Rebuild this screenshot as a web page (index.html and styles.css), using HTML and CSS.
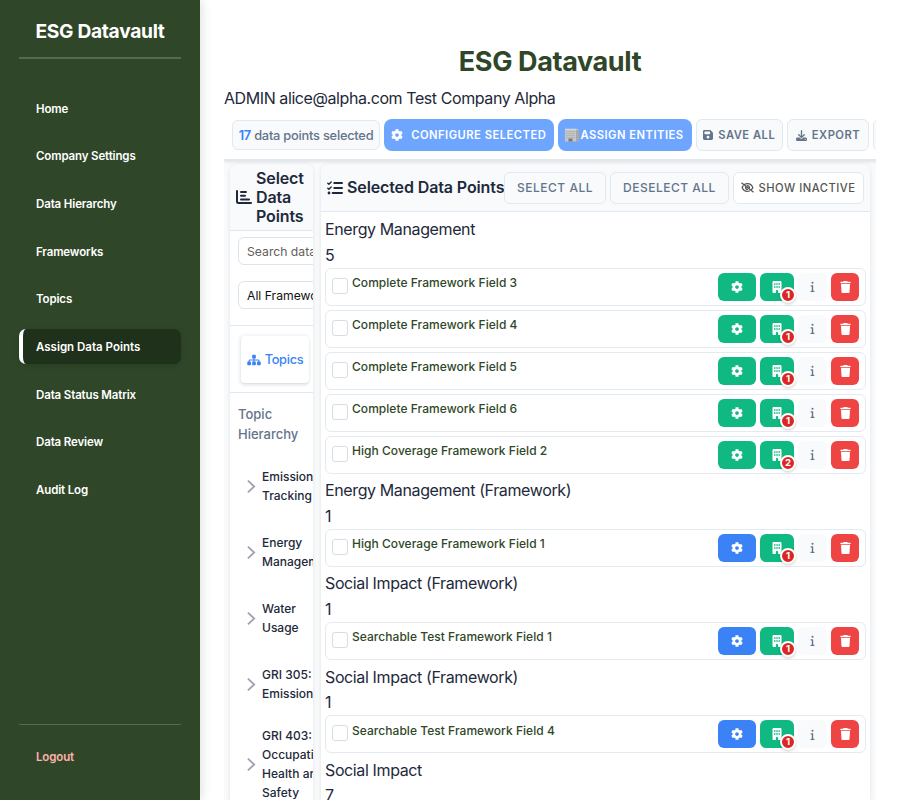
FILE: index.html
```
<!DOCTYPE html>
<html lang="en">
<head>
<meta charset="utf-8">
<title>ESG Datavault</title>
<link rel="stylesheet" href="styles.css">
</head>
<body>
<svg class="defs" aria-hidden="true">
<symbol id="gear" viewBox="0 0 512 512"><path d="M487.4 315.7l-42.6-24.6c4.3-23.2 4.3-47 0-70.2l42.6-24.6c4.9-2.8 7.1-8.6 5.5-14-11.1-35.6-30-67.8-54.7-94.6-3.8-4.1-10-5.1-14.8-2.3L380.8 110c-17.9-15.4-38.5-27.3-60.8-35.1V25.8c0-5.6-3.9-10.5-9.4-11.7-36.7-8.2-74.3-7.8-109.2 0-5.5 1.2-9.4 6.1-9.4 11.7V75c-22.2 7.9-42.8 19.8-60.8 35.1L88.7 85.5c-4.9-2.8-11-1.9-14.8 2.3-24.7 26.7-43.6 58.9-54.7 94.6-1.7 5.4.6 11.2 5.5 14L67.3 221c-4.3 23.2-4.3 47 0 70.2l-42.6 24.6c-4.9 2.8-7.1 8.6-5.5 14 11.1 35.6 30 67.8 54.7 94.6 3.8 4.1 10 5.1 14.8 2.3l42.6-24.6c17.9 15.4 38.5 27.3 60.8 35.1v49.2c0 5.6 3.9 10.5 9.4 11.7 36.7 8.2 74.3 7.8 109.2 0 5.5-1.2 9.4-6.1 9.4-11.7v-49.2c22.2-7.9 42.8-19.8 60.8-35.1l42.6 24.6c4.9 2.8 11 1.9 14.8-2.3 24.7-26.7 43.6-58.9 54.7-94.6 1.5-5.5-.7-11.3-5.6-14.1zM256 336c-44.1 0-80-35.9-80-80s35.9-80 80-80 80 35.9 80 80-35.9 80-80 80z"/></symbol>
<symbol id="trash" viewBox="0 0 448 512"><path d="M135.2 17.7L128 32H32C14.3 32 0 46.3 0 64S14.3 96 32 96H416c17.7 0 32-14.3 32-32s-14.3-32-32-32H320l-7.2-14.3C307.4 6.8 296.3 0 284.2 0H163.8c-12.1 0-23.2 6.8-28.6 17.7zM416 128H32L53.2 467c1.6 25.3 22.6 45 47.9 45H346.9c25.3 0 46.3-19.7 47.9-45L416 128z"/></symbol>
<symbol id="info" viewBox="0 0 192 512"><path d="M48 80a48 48 0 1 1 96 0A48 48 0 1 1 48 80zM0 224c0-17.7 14.3-32 32-32H96c17.7 0 32 14.3 32 32V448h32c17.7 0 32 14.3 32 32s-14.3 32-32 32H32c-17.7 0-32-14.3-32-32s14.3-32 32-32H64V256H32c-17.7 0-32-14.3-32-32z"/></symbol>
<symbol id="building" viewBox="0 0 384 512"><path fill-rule="evenodd" d="M48 0C21.500 0 0 21.500 0 48V464c0 26.500 21.500 48 48 48h96V432c0-26.500 21.500-48 48-48s48 21.500 48 48v80h96c26.500 0 48-21.500 48-48V48c0-26.500-21.500-48-48-48H48zM64 96h64v64H64zM160 96h64v64h-64zM256 96h64v64h-64zM64 224h64v64H64zM160 224h64v64h-64zM256 224h64v64h-64z"/></symbol>
<symbol id="save" viewBox="0 0 448 512"><path d="M64 32C28.700 32 0 60.700 0 96V416c0 35.300 28.700 64 64 64H384c35.300 0 64-28.700 64-64V173.300c0-17-6.700-33.300-18.700-45.300L352 50.700C340 38.700 323.700 32 306.700 32H64zm0 96c0-17.700 14.300-32 32-32H288c17.700 0 32 14.300 32 32v64c0 17.700-14.300 32-32 32H96c-17.700 0-32-14.300-32-32V128zM224 288a64 64 0 1 1 0 128 64 64 0 1 1 0-128z"/></symbol>
<symbol id="download" viewBox="0 0 512 512"><path d="M288 32c0-17.700-14.300-32-32-32s-32 14.300-32 32V274.700l-73.400-73.400c-12.500-12.500-32.800-12.500-45.300 0s-12.500 32.800 0 45.300l128 128c12.500 12.500 32.800 12.500 45.300 0l128-128c12.500-12.500 12.500-32.800 0-45.300s-32.800-12.500-45.300 0L288 274.700V32zM64 352c-35.300 0-64 28.700-64 64v32c0 35.300 28.700 64 64 64H448c35.300 0 64-28.700 64-64V416c0-35.300-28.700-64-64-64H346.500l-45.300 45.300c-25 25-65.500 25-90.500 0L165.500 352H64zm368 56a24 24 0 1 1 0 48 24 24 0 1 1 0-48z"/></symbol>
<symbol id="eye" viewBox="0 0 20 16"><g fill="none" stroke="currentColor" stroke-width="1.900" stroke-linecap="round"><path d="M5.200 3.500C7 2.300 8.500 2 10 2c4 0 7 2.800 8.200 6-.5 1.200-1.200 2.200-2.200 3.200M13 13.400c-1 .4-2 .6-3 .6-4 0-7-2.800-8.200-6 .3-.8.8-1.600 1.400-2.300M7 7.500c0 2 1.200 3.400 3 3.500M9.500 5.100c2 0 3.500 1.300 3.500 3.300M1.200 1.200l17.600 13.600"/></g></symbol>
<symbol id="sitemap" viewBox="0 0 576 512"><path d="M208 80c0-26.500 21.500-48 48-48h64c26.500 0 48 21.500 48 48v64c0 26.500-21.500 48-48 48h-8v40H464c30.900 0 56 25.100 56 56v32h8c26.500 0 48 21.500 48 48v64c0 26.500-21.500 48-48 48H464c-26.500 0-48-21.500-48-48V368c0-26.500 21.500-48 48-48h8V288c0-4.400-3.600-8-8-8H312v40h8c26.500 0 48 21.500 48 48v64c0 26.500-21.500 48-48 48H256c-26.500 0-48-21.500-48-48V368c0-26.500 21.500-48 48-48h8V280H112c-4.400 0-8 3.600-8 8v32h8c26.500 0 48 21.500 48 48v64c0 26.500-21.500 48-48 48H48c-26.500 0-48-21.500-48-48V368c0-26.500 21.500-48 48-48h8V288c0-30.900 25.100-56 56-56H264V192h-8c-26.500 0-48-21.500-48-48V80z"/></symbol>
<symbol id="chart" viewBox="0 0 16 14"><path fill="none" stroke="currentColor" stroke-width="2" stroke-linecap="round" stroke-linejoin="round" d="M1 1v10.500Q1 13 2.500 13H15M5 2h5M5 5.700h4M5 9.400h8"/></symbol>
<symbol id="checks" viewBox="0 0 16 14"><g fill="none" stroke="currentColor" stroke-linecap="round" stroke-linejoin="round"><path stroke-width="2" d="M7.300 2H15M7.300 7H15M5.700 12H15"/><path stroke-width="1.400" d="M.8 2.200l1.100 1.100L4.200.9M.8 7.200l1.100 1.100L4.200 5.900"/></g><circle cx="2" cy="12" r="1.400"/></symbol>
<symbol id="chevron" viewBox="0 0 10 16"><path fill="none" stroke="currentColor" stroke-width="2" d="M1 1.500l7 6.500-7 6.500"/></symbol>
<symbol id="office" viewBox="0 0 14 14"><path fill="#c6c6c4" d="M0 1h11v12.500H0z"/><path fill="#aaa9a7" d="M11 1.500h3v12h-3z"/><path fill="#dcdcda" d="M0 .8h11l3 .9H0z"/><path stroke="#a9b0b3" stroke-width=".7" d="M1 3.500h9M1 5.500h9M1 7.500h9M1 9.500h9"/><path fill="#77797a" d="M3.500 10.500h4v3h-4z"/></symbol>
</svg>
<div class="app">
  <aside class="sidebar">
    <div class="brand">ESG Datavault</div>
    <nav class="nav">
      <a>Home</a><a>Company Settings</a><a>Data Hierarchy</a><a>Frameworks</a><a>Topics</a><a class="active">Assign Data Points</a><a>Data Status Matrix</a><a>Data Review</a><a>Audit Log</a>
    </nav>
    <div class="logout">Logout</div>
  </aside>
  <main class="main">
    <h1>ESG Datavault</h1>
    <div class="user">ADMIN alice@alpha.com Test Company Alpha</div>
    <div class="toolbar">
      <div class="count"><b>17</b> data points selected</div>
      <button class="btn primary configure"><svg><use href="#gear"/></svg>CONFIGURE SELECTED</button>
      <button class="btn primary assign"><svg><use href="#office"/></svg>ASSIGN ENTITIES</button>
      <button class="btn save"><svg><use href="#save"/></svg>SAVE ALL</button>
      <button class="btn export"><svg><use href="#download"/></svg>EXPORT</button>
      <button class="btn more"></button>
    </div>
    <div class="panels">
      <section class="panel left">
        <header><svg><use href="#chart"/></svg><h2>Select Data Points</h2></header>
        <div class="filters"><div class="field muted">Search data points...</div><div class="field">All Frameworks</div></div>
        <div class="tabs"><div class="tabtrack"><div class="tab"><svg><use href="#sitemap"/></svg>Topics</div></div></div>
        <div class="hierarchy">
          <h3>Topic Hierarchy</h3>
          <div class="node"><svg><use href="#chevron"/></svg><span>Emissions<br>Tracking</span></div>
          <div class="node"><svg><use href="#chevron"/></svg><span>Energy<br>Management</span></div>
          <div class="node"><svg><use href="#chevron"/></svg><span>Water<br>Usage</span></div>
          <div class="node"><svg><use href="#chevron"/></svg><span>GRI 305:<br>Emissions</span></div>
          <div class="node tall"><svg><use href="#chevron"/></svg><span>GRI 403:<br>Occupational<br>Health and<br>Safety</span></div>
        </div>
      </section>
      <section class="panel right">
        <header><svg><use href="#checks"/></svg><h2>Selected Data Points</h2><button class="btn selectall">SELECT ALL</button><button class="btn deselect">DESELECT ALL</button><button class="btn inactive"><svg><use href="#eye"/></svg>SHOW INACTIVE</button></header>
        <div class="groups" id="groups"></div>
      </section>
    </div>
  </main>
</div>
<script src="script.js"></script>
</body>
</html>
```
FILE: styles.css
```
*{box-sizing:border-box}
body{margin:0;font-family:Inter,sans-serif;font-size:16px;line-height:25.6px;color:#1e293b;background:#fff}
.defs{display:none}
svg{fill:currentColor;flex:none;overflow:visible}
.app{display:flex;height:800px;overflow:hidden}
.sidebar{width:200px;flex:none;background:#2f4728;color:#fff;padding:0 19px;display:flex;flex-direction:column;box-shadow:2px 0 10px rgba(0,0,0,.12);z-index:1}
.brand{height:59px;border-bottom:2px solid #57694f;text-align:center;font-size:19.2px;font-weight:700;line-height:63px;letter-spacing:-.3px;white-space:nowrap}
.nav{display:flex;flex-direction:column;gap:12.7px;margin-top:31.500px}
.nav a{height:35px;border-left:4px solid transparent;border-radius:7px;padding-left:13px;font-size:11.500px;font-weight:600;line-height:36.500px;letter-spacing:-.14px}
.nav .active{background:#1f301b;border-left-color:#fff;box-shadow:0 2px 6px rgba(0,0,0,.15);letter-spacing:0}
.logout{margin-top:auto;height:76px;border-top:1px solid #57694f;padding-left:17px;line-height:65px;font-size:11.500px;font-weight:600;color:#feb2ae;letter-spacing:-.14px}
.main{width:652px;margin-left:24px;display:flex;flex-direction:column;overflow:hidden}
h1{margin:43px 0 0;height:43px;flex:none;text-align:center;font-size:27px;line-height:38px;font-weight:700;letter-spacing:-.37px;color:#2f4728}
.user{height:33px;flex:none;line-height:25px;letter-spacing:-.42px;white-space:nowrap}
.toolbar{display:flex;gap:4px;height:42px;flex:none;padding-left:8px;border-bottom:2px solid #e2e8f0;box-shadow:0 1px 3px rgba(0,0,0,.1);clip-path:inset(0 0 -6px 0);position:relative;align-items:flex-start}
.count{width:148px;height:30px;margin-top:1px;border:1px solid #e2e8f0;border-radius:6px;background:#f8fafc;font-size:12.800px;font-weight:500;line-height:29px;color:#64748b;text-align:center;white-space:nowrap;letter-spacing:-.22px;flex:none}
.count b{color:#3b82f6;font-weight:600}
.btn{height:32px;padding:0;border:1px solid #e2e8f0;border-radius:6px;background:#f8fafc;color:#64748b;display:flex;align-items:center;justify-content:center;font:600 11.200px Inter,sans-serif;letter-spacing:.5px;white-space:nowrap;flex:none}
.primary{background:#6ea6ff;border:0;border-radius:8px;color:#fff}
.configure{width:169.500px}.configure svg{width:12px;height:12px;margin-right:8px}
.assign{width:134px}.assign svg{width:14px;height:14px;margin-right:1px}
.save{width:87.500px}.save svg{width:10px;height:12px;margin-right:5px}
.export{width:82px}.export svg{width:11px;height:11px;margin-right:5px}
.more{width:40px}
.panels{flex:1;min-height:0;display:flex;gap:8px;padding:3px 6px 0;background:#f8fafc}
.panel{background:#fff;border-radius:8px 8px 0 0;box-shadow:0 1px 4px rgba(0,0,0,.1);overflow:hidden}
.left{width:83px;flex:none}
.right{flex:1}
.panel header{background:#f8fafc;border-bottom:1px solid #e2e8f0;display:flex;align-items:center}
h2{margin:0;font-size:16px;font-weight:600;line-height:19px;letter-spacing:-.12px}
.left header{height:67px;padding-left:6px}
.left header svg{width:16px;height:14px;margin-right:4px}
.right header{height:48px;padding-left:6px}
.right header svg{width:16px;height:14px;margin-right:4px}
.right h2{width:157px;white-space:nowrap}
.right .btn{font-size:12px;font-weight:500}
.right .btn+.btn{margin-left:4px}
.right .selectall{width:102px}
.right .deselect{width:119px}
.right .inactive{width:131px;background:#fff;color:#555;font-size:11.200px}
.right .inactive svg{width:13px;height:11px;margin-right:4px}
.filters{height:95px;padding:6px 0 0 8px;border-bottom:1px solid #e2e8f0;display:flex;flex-direction:column;gap:16px}
.field{width:140px;height:28px;border:1px solid #dce4ed;border-radius:6px;padding-left:8px;font-size:12.200px;line-height:27px;color:#111;white-space:nowrap}
.muted{color:#606060}
.tabs{height:67px;border-bottom:1px solid #e2e8f0;padding:7px 0 0 8px}
.tabtrack{width:71px;height:54px;background:#f8fafc;border-radius:6px;padding:3px}
.tab{width:68px;height:47px;background:#fff;border-radius:4px;box-shadow:0 1px 3px rgba(0,0,0,.15);display:flex;align-items:center;justify-content:center;gap:4px;color:#3b82f6;font-size:12.800px;font-weight:500;letter-spacing:-.3px}
.tab svg{width:14px;height:12px}
.hierarchy{padding:11px 0 0 8px}
h3{margin:0;font-size:13px;font-weight:500;line-height:20px;color:#64748b;width:70px}
.node{height:66px;display:flex;align-items:center;padding-left:9px;font-size:12px;font-weight:500;line-height:19px;white-space:nowrap}
.node svg{width:9px;height:15px;margin-right:6px;color:#9ca3af}
h3+.node{margin-top:9px}
.tall{height:94px}
.groups{padding:5px 4px 0}
.group-head{letter-spacing:-.38px;margin-bottom:-.7px}
.row{height:38px;margin-bottom:4px;border:1px solid #e4eaf1;border-radius:6px;display:flex;align-items:center;padding:0 6px}
.row+.group-head{margin-top:4.7px}
.box{width:16px;height:16px;border:1px solid #d8dde4;border-radius:3px;background:#fff;margin-top:-2px}
.name{flex:1;align-self:flex-start;padding-left:4px;margin-top:4.600px;color:#2f4728;font-size:12px;font-weight:500;line-height:20px;letter-spacing:.04px}
.act{height:28px;border-radius:6px;display:flex;align-items:center;justify-content:center;margin-left:4px;color:#fff;background:#10b981;position:relative}
.cog{width:38.500px}.cog svg{width:12px;height:12px}
.blue{background:#3b82f6}
.ent{width:34px}.ent svg{width:10px;height:12px}
.inf{width:29px;background:#f8fafc;color:#64748b}.inf svg{width:5px;height:11px}
.del{width:28px;background:#ef4444}.del svg{width:11px;height:12px}
.badge{position:absolute;right:-2px;bottom:-2px;width:16px;height:16px;border:2px solid #fff;border-radius:50%;background:#dc2626;font-size:9.600px;font-weight:700;line-height:12px;text-align:center;box-shadow:0 1px 3px rgba(0,0,0,.2)}
```
FILE: script.js
```
const groups = [
  ["Energy Management", 5, [["Complete Framework Field 3", 1], ["Complete Framework Field 4", 1], ["Complete Framework Field 5", 1], ["Complete Framework Field 6", 1], ["High Coverage Framework Field 2", 2]]],
  ["Energy Management (Framework)", 1, [["High Coverage Framework Field 1", 1, "blue"]]],
  ["Social Impact (Framework)", 1, [["Searchable Test Framework Field 1", 1, "blue"]]],
  ["Social Impact (Framework)", 1, [["Searchable Test Framework Field 4", 1, "blue"]]],
  ["Social Impact", 7, []]
];
const icon = id => `<svg><use href="#${id}"/></svg>`;
document.getElementById("groups").innerHTML = groups.map(([title, count, rows]) =>
  `<div class="group-head"><div>${title}</div><div>${count}</div></div>` + rows.map(([name, n, tone = ""]) =>
    `<div class="row"><span class="box"></span><span class="name">${name}</span><span class="act cog ${tone}">${icon("gear")}</span><span class="act ent">${icon("building")}<span class="badge">${n}</span></span><span class="act inf">${icon("info")}</span><span class="act del">${icon("trash")}</span></div>`).join("")).join("");
```
